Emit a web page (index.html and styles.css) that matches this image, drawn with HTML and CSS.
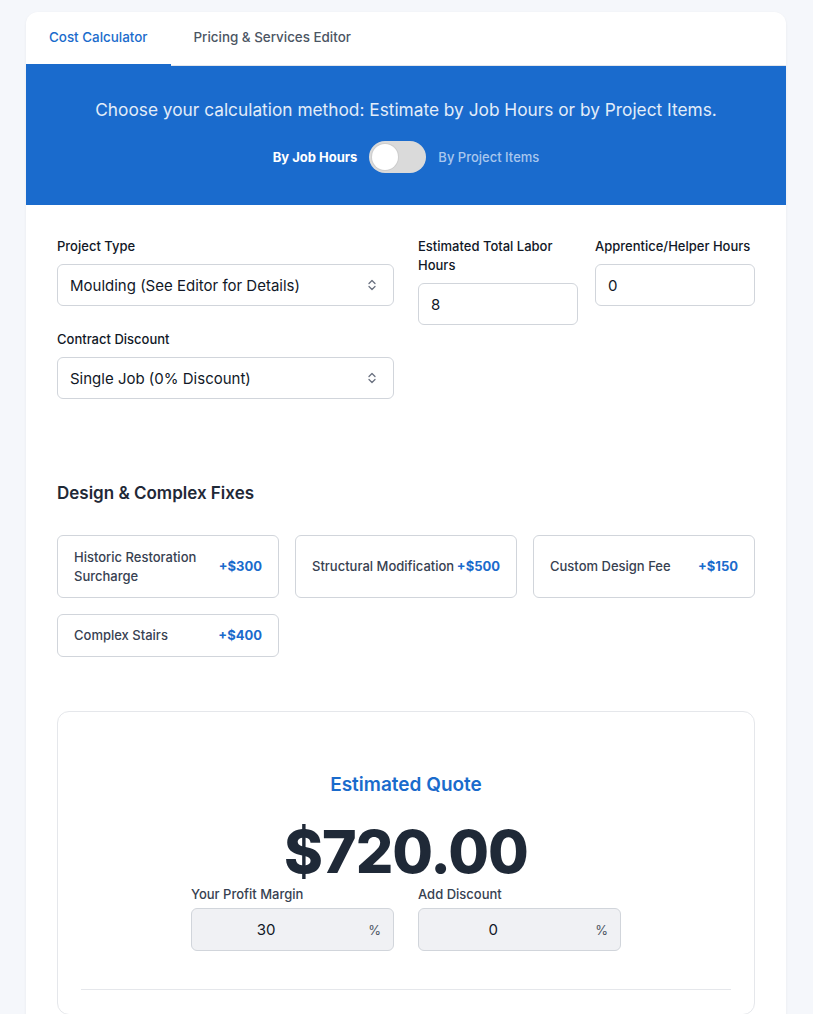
FILE: index.html
```html
<!DOCTYPE html>
<html lang="en">
<head>
<meta charset="utf-8">
<title>Cost Calculator</title>
<link rel="stylesheet" href="styles.css">
</head>
<body>
<div class="card">
  <nav class="tabs">
    <div class="tab active">Cost Calculator</div>
    <div class="tab">Pricing &amp; Services Editor</div>
  </nav>
  <section class="banner">
    <p class="banner-title">Choose your calculation method: Estimate by Job Hours or by Project Items.</p>
    <div class="mode">
      <span class="mode-on">By Job Hours</span>
      <span class="switch"><span class="knob"></span></span>
      <span class="mode-off">By Project Items</span>
    </div>
  </section>
  <section class="form">
    <div class="grid">
      <div class="col-left">
        <div class="field">
          <label class="label">Project Type</label>
          <div class="select">Moulding (See Editor for Details)
            <svg class="chev" width="10" height="14" viewBox="0 0 10 14"><path d="M2 5.5 L5 2.5 L8 5.5 M2 8.5 L5 11.5 L8 8.5" fill="none" stroke="#6b7280" stroke-width="1.3" stroke-linecap="round" stroke-linejoin="round"/></svg>
          </div>
        </div>
        <div class="field">
          <label class="label">Contract Discount</label>
          <div class="select">Single Job (0% Discount)
            <svg class="chev" width="10" height="14" viewBox="0 0 10 14"><path d="M2 5.5 L5 2.5 L8 5.5 M2 8.5 L5 11.5 L8 8.5" fill="none" stroke="#6b7280" stroke-width="1.3" stroke-linecap="round" stroke-linejoin="round"/></svg>
          </div>
        </div>
      </div>
      <div class="col-right">
        <div class="field">
          <label class="label">Estimated Total Labor Hours</label>
          <div class="input">8</div>
        </div>
        <div class="field">
          <label class="label">Apprentice/Helper Hours</label>
          <div class="input">0</div>
        </div>
      </div>
    </div>

    <h2 class="section-title">Design &amp; Complex Fixes</h2>
    <div class="items">
      <div class="item tall"><span class="item-name">Historic Restoration Surcharge</span><span class="price">+$300</span></div>
      <div class="item tall"><span class="item-name nowrap">Structural Modification</span><span class="price">+$500</span></div>
      <div class="item tall"><span class="item-name">Custom Design Fee</span><span class="price">+$150</span></div>
      <div class="item"><span class="item-name">Complex Stairs</span><span class="price">+$400</span></div>
    </div>

    <div class="quote">
      <h3 class="quote-title">Estimated Quote</h3>
      <div class="amount">$720.00</div>
      <div class="adjust">
        <div class="adj-field">
          <label class="adj-label">Your Profit Margin</label>
          <div class="adj-input"><span class="adj-val">30</span><span class="pct">%</span></div>
        </div>
        <div class="adj-field">
          <label class="adj-label">Add Discount</label>
          <div class="adj-input"><span class="adj-val">0</span><span class="pct">%</span></div>
        </div>
      </div>
      <hr class="divider">
    </div>
  </section>
</div>
</body>
</html>
```
FILE: styles.css
```css
* { box-sizing: border-box; }
html, body { margin: 0; padding: 0; }
body {
  background: #f5f7fb;
  font-family: Inter, "Noto Sans", "Liberation Sans", sans-serif;
  color: #111827;
  padding: 12px 27px 0 26px;
}
.card {
  background: #fff;
  border-radius: 12px 12px 0 0;
  box-shadow: 0 1px 3px rgba(0,0,0,0.06);
  overflow: hidden;
  min-height: 1010px;
}
.tabs {
  display: flex;
  height: 54px;
  border-bottom: 1px solid #e5e7eb;
}
.tab {
  padding: 0 23px 2px;
  display: flex;
  align-items: center;
  font-size: 13.4px;
  font-weight: 500;
  color: #4b5563;
  border-bottom: 2px solid transparent;
  margin-bottom: -1px;
}
.tab.active {
  color: #1a6bcc;
  border-bottom-color: #1a6bcc;
}
.banner {
  background: #1a6bcd;
  padding: 32px 20px 32px;
  text-align: center;
}
.banner-title {
  margin: 0;
  font-size: 17.3px;
  line-height: 24px;
  color: #e3edf9;
}
.mode {
  margin-top: 19px;
  display: flex;
  justify-content: center;
  align-items: center;
  gap: 12px;
  font-size: 13px;
}
.mode-on { color: #fff; font-weight: 700; }
.mode-off { color: #a9c7ee; font-weight: 500; }
.switch {
  width: 57px;
  height: 32px;
  border-radius: 16px;
  background: #dadada;
  display: flex;
  align-items: center;
  padding: 0 3px;
}
.knob {
  width: 26px;
  height: 26px;
  border-radius: 50%;
  background: #fff;
  box-shadow: 0 0 0 1px rgba(0,0,0,0.06);
}
.form {
  padding: 32px 31px 0 31px;
}
.grid {
  display: grid;
  grid-template-columns: 1fr 1fr;
  gap: 24px;
}
.col-left { display: flex; flex-direction: column; gap: 24px; }
.col-right { display: grid; grid-template-columns: 1fr 1fr; gap: 17px; align-items: start; }
.field { display: flex; flex-direction: column; }
.label {
  font-size: 13px;
  line-height: 19px;
  font-weight: 500;
  color: #111827;
  margin-bottom: 8px;
}
.select, .input {
  height: 42px;
  border: 1px solid #d1d5db;
  border-radius: 6px;
  padding: 0 12px;
  display: flex;
  align-items: center;
  font-size: 15px;
  color: #111827;
  background: #fff;
}
.select { justify-content: space-between; }
.chev { margin-right: 4px; }
.section-title {
  margin: 82px 0 0;
  font-size: 17px;
  line-height: 24px;
  font-weight: 600;
  color: #1f2937;
}
.items {
  margin-top: 30px;
  display: grid;
  grid-template-columns: repeat(3, 1fr);
  gap: 16px;
  align-items: start;
}
.item {
  border: 1px solid #d1d5db;
  border-radius: 6px;
  padding: 11px 16px;
  display: flex;
  justify-content: space-between;
  align-items: center;
  font-size: 13px;
  line-height: 19px;
  min-height: 43px;
}
.item.tall { min-height: 63px; }
.item-name { color: #374151; font-weight: 500; }
.item-name.nowrap { white-space: nowrap; }
.price { color: #1a6bcc; font-weight: 700; white-space: nowrap; }
.quote {
  margin-top: 54px;
  border: 1px solid #e5e7eb;
  border-radius: 12px;
  padding: 60px 23px 24px;
  text-align: center;
}
.quote-title {
  margin: 0;
  font-size: 19px;
  line-height: 26px;
  font-weight: 600;
  color: #1a6bcc;
}
.amount {
  margin-top: 24px;
  font-size: 59px;
  line-height: 60px;
  font-weight: 800;
  color: #1f2937;
  letter-spacing: -1px;
}
.adjust {
  width: 430px;
  margin: 3px auto 0;
  display: grid;
  grid-template-columns: 1fr 1fr;
  gap: 24px;
  text-align: left;
}
.adj-field { display: flex; flex-direction: column; }
.adj-label {
  font-size: 13px;
  line-height: 18px;
  font-weight: 500;
  color: #374151;
  margin-bottom: 5px;
}
.adj-input {
  height: 43px;
  background: #f0f1f4;
  border: 1px solid #d1d5db;
  border-radius: 6px;
  display: flex;
  align-items: center;
  padding: 0 12px 0 0;
  font-size: 15px;
  color: #111827;
}
.adj-val { flex: 1; text-align: center; padding-right: 28px; }
.pct { font-size: 13px; color: #4b5563; }
.divider {
  margin: 38px 0 0;
  border: 0;
  border-top: 1px solid #e5e7eb;
}
```
